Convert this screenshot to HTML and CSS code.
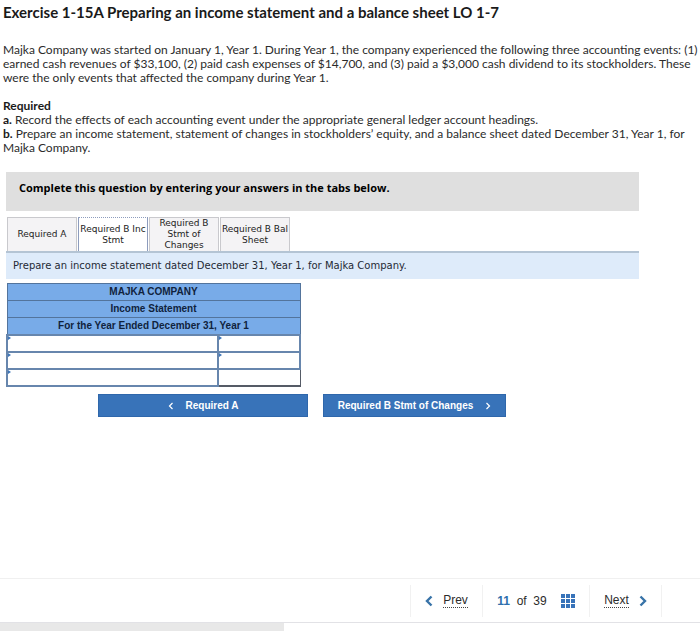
FILE: index.html
```html
<!DOCTYPE html>
<html lang="en">
<head>
    <meta charset="UTF-8">
    <meta name="viewport" content="width=device-width, initial-scale=1.0">
    <title>Exercise 1-15A</title>
    <link rel="stylesheet" href="styles.css">
</head>
<body>
    <main>
        <section class="question">
            <h1>Exercise 1-15A Preparing an income statement and a balance sheet LO 1-7</h1>
            <p>
                Majka Company was started on January 1, Year 1. During Year 1, the company experienced the following three accounting events: (1)<br>
                earned cash revenues of $33,100, (2) paid cash expenses of $14,700, and (3) paid a $3,000 cash dividend to its stockholders. These<br>
                were the only events that affected the company during Year 1.
            </p>
            <p>
                <b>Required</b><br>
                <b>a.</b> Record the effects of each accounting event under the appropriate general ledger account headings.<br>
                <b>b.</b> Prepare an income statement, statement of changes in stockholders’ equity, and a balance sheet dated December 31, Year 1, for<br>
                Majka Company.
            </p>
        </section>

        <section class="answer">
            <div class="banner">Complete this question by entering your answers in the tabs below.</div>

            <div class="tabs" role="tablist">
                <button class="tab" role="tab">Required A</button>
                <button class="tab active" role="tab" aria-selected="true">Required B Inc<br>Stmt</button>
                <button class="tab" role="tab">Required B<br>Stmt of<br>Changes</button>
                <button class="tab" role="tab">Required B Bal<br>Sheet</button>
            </div>
            <div class="instruction">Prepare an income statement dated December 31, Year 1, for Majka Company.</div>

            <table class="statement">
                <colgroup>
                    <col class="col-item">
                    <col>
                </colgroup>
                <thead>
                    <tr><th colspan="2">MAJKA COMPANY</th></tr>
                    <tr><th colspan="2">Income Statement</th></tr>
                    <tr><th colspan="2">For the Year Ended December 31, Year 1</th></tr>
                </thead>
                <tbody>
                    <tr>
                        <td class="entry"><input type="text" aria-label="Item 1"></td>
                        <td class="entry"><input type="text" aria-label="Amount 1"></td>
                    </tr>
                    <tr>
                        <td class="entry"><input type="text" aria-label="Item 2"></td>
                        <td class="entry"><input type="text" aria-label="Amount 2"></td>
                    </tr>
                    <tr>
                        <td class="entry"><input type="text" aria-label="Item 3"></td>
                        <td class="total"></td>
                    </tr>
                </tbody>
            </table>

            <div class="steps">
                <button class="step step-back">
                    <svg width="6" height="8" viewBox="0 0 6 8"><path d="M4.5 1L1.5 4l3 3"/></svg>
                    Required A
                </button>
                <button class="step step-next">
                    Required B Stmt of Changes
                    <svg width="6" height="8" viewBox="0 0 6 8"><path d="M1.5 1l3 3-3 3"/></svg>
                </button>
            </div>
        </section>
    </main>

    <footer>
        <nav class="pager">
            <div class="pager-item prev">
                <svg class="arrow" width="8" height="12" viewBox="0 0 8 12"><path d="M6.5 1.5L2 6l4.5 4.5"/></svg>
                <a href="#">Prev</a>
            </div>
            <div class="pager-item position">
                <span><b>11</b>&nbsp; of &nbsp;39</span>
                <svg class="grid" width="14" height="14" viewBox="0 0 14 14">
                    <path d="M0 0h4v4H0zM5 0h4v4H5zM10 0h4v4h-4zM0 5h4v4H0zM5 5h4v4H5zM10 5h4v4h-4zM0 10h4v4H0zM5 10h4v4H5zM10 10h4v4h-4z"/>
                </svg>
            </div>
            <div class="pager-item next">
                <a href="#">Next</a>
                <svg class="arrow" width="8" height="12" viewBox="0 0 8 12"><path d="M1.5 1.5L6 6l-4.5 4.5"/></svg>
            </div>
        </nav>
        <div class="status"></div>
    </footer>
</body>
</html>
```
FILE: styles.css
```css
* {
    box-sizing: border-box;
}

body {
    display: flex;
    flex-direction: column;
    min-height: 100vh;
    margin: 0;
    background: #fff;
    color: #2b2b2b;
    font-family: Lato, sans-serif;
    font-size: 12px;
    line-height: 14px;
}

main {
    flex: 1;
}

button {
    margin: 0;
    padding: 0;
    cursor: pointer;
}

/* question text */
.question {
    padding: 2px 0 0 3px;
    white-space: nowrap;
}

h1 {
    margin: 0 0 21px;
    font-size: 15px;
    line-height: 20px;
    color: #1a1a1a;
}

p {
    margin: 0 0 14px;
}

b {
    color: #1a1a1a;
}

/* answer area */
.answer {
    margin: 17px 61px 0 6px;
}

.banner {
    padding: 8px 13px 15px;
    background: #dfdfdf;
    color: #000;
    font: bold 11px/16px "Open Sans", sans-serif;
}

.tabs {
    display: flex;
    gap: 1px;
    height: 34px;
    margin-top: 6px;
    padding-left: 1px;
}

.tab {
    width: 70px;
    border: 1px solid #c9c9cd;
    border-bottom: none;
    background: #f4f3f5;
    color: #222;
    font: 9px/11px "DejaVu Sans", sans-serif;
    white-space: nowrap;
}

.tab.active {
    border: 1px solid #8d9cbd;
    border-top-style: dotted;
    border-bottom: none;
    background: #fff;
}

.instruction {
    padding: 5px 7px 6px;
    border-top: 2px solid #b4c4d4;
    background: #deebfa;
    color: #1f2a35;
    font: 10px/15px "DejaVu Sans", sans-serif;
}

.statement {
    width: 295px;
    margin-top: 4px;
    border-collapse: collapse;
    table-layout: fixed;
    font: 10px/16px "Liberation Sans", sans-serif;
}

.col-item {
    width: 72%;
}

.statement th {
    padding: 0;
    border: 1px solid #53749c;
    background: #78abe8;
    color: #10233d;
}

.statement td {
    height: 17px;
    padding: 0;
    border: 2px solid #6786ad;
}

.entry {
    position: relative;
}

/* marker on cells that can be filled in */
.entry::before {
    content: "";
    position: absolute;
    top: 0;
    left: 0;
    border-left: 3px solid #3f76b8;
    border-top: 2px solid transparent;
    border-bottom: 2px solid transparent;
}

.entry input {
    display: block;
    width: 100%;
    height: 15px;
    padding: 0 4px;
    border: none;
    outline: none;
    background: transparent;
    font: inherit;
}

.statement .total {
    border: 1px solid #555b66;
    border-bottom-width: 2px;
}

.steps {
    display: flex;
    gap: 15px;
    margin: 7px 0 20px 92px;
}

.step {
    display: flex;
    align-items: center;
    justify-content: center;
    gap: 12px;
    height: 23px;
    border: 1px solid #2f67ab;
    background: #3873b9;
    color: #fff;
    font: bold 10px/14px "Liberation Sans", sans-serif;
    white-space: nowrap;
}

.step-back {
    width: 210px;
}

.step-next {
    width: 183px;
}

svg {
    flex: none;
    fill: none;
}

.step svg {
    stroke: #fff;
    stroke-width: 1.2;
}

/* bottom bar */
footer {
    border-top: 1px solid #f0f0f0;
}

.pager {
    display: flex;
    justify-content: flex-end;
    padding: 6px 38px 5px 0;
    border-bottom: 1px solid #e2e2e6;
    font: 12px/16px "Liberation Sans", sans-serif;
}

.pager-item {
    display: flex;
    align-items: center;
    justify-content: center;
    height: 32px;
    border-left: 1px solid #f1f1f1;
}

.pager-item b {
    color: #2f6fad;
}

.pager a {
    border-bottom: 1px dotted #444;
    color: #2b2b2b;
    line-height: 13px;
    text-decoration: none;
}

.prev {
    width: 72px;
    gap: 10px;
}

.position {
    width: 107px;
    gap: 14px;
}

.next {
    width: 73px;
    gap: 10px;
    border-right: 1px solid #f1f1f1;
}

.arrow {
    stroke: #3873a8;
    stroke-width: 2.4;
}

.grid {
    fill: #3873b9;
}

.status {
    width: 284px;
    height: 8px;
    background: #e8e8e8;
}
```
